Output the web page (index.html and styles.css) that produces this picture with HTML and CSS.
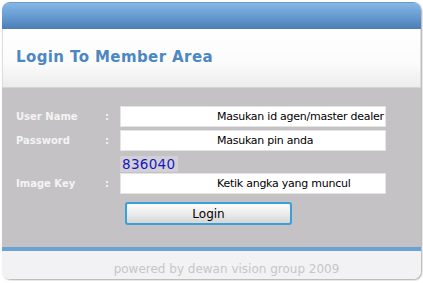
FILE: index.html
```html
<!DOCTYPE html>
<html lang="en">
<head>
    <meta charset="UTF-8">
    <title>Login To Member Area</title>
    <link rel="stylesheet" href="styles.css">
</head>
<body>

    <div class="panel">
        <div class="panel-top"></div>
        <div class="panel-head">
            <h1>Login To Member Area</h1>
        </div>

        <form class="panel-body" onsubmit="return false">
            <div class="form-grid">
                <label for="user">User Name</label>
                <span class="colon">:</span>
                <input type="text" id="user" placeholder="Masukan id agen/master dealer">

                <label for="pin">Password</label>
                <span class="colon">:</span>
                <input type="password" id="pin" placeholder="Masukan pin anda">

                <span></span>
                <span></span>
                <div class="captcha"><span>836040</span></div>

                <label for="key">Image Key</label>
                <span class="colon">:</span>
                <input type="text" id="key" placeholder="Ketik angka yang muncul">
            </div>
            <button type="submit" class="btn-login">Login</button>
        </form>

        <div class="panel-line"></div>
        <div class="panel-foot">powered by dewan vision group 2009</div>
    </div>

</body>
</html>
```

FILE: styles.css
```css
body { margin: 0; padding: 2px; background: #fff; font-family: Tahoma, "DejaVu Sans", Verdana, sans-serif; }

.panel { width: 419px; border-radius: 8px; box-shadow: 1px 1px 2px rgba(0,0,0,0.35); overflow: hidden; }

.panel-top { height: 26px; background: linear-gradient(#86b6e4, #6a9fd4 45%, #4b7db6); border-top: 1px solid #6f9ac4; }

.panel-head { height: 58px; background: linear-gradient(#fff, #fbfbfb 60%, #ececec); border-left: 1px solid #ddd; border-right: 1px solid #ddd; box-sizing: border-box; padding: 19px 0 0 13px; }
.panel-head h1 { margin: 0; font-size: 15px; font-weight: bold; color: #4d87c2; letter-spacing: 0.4px; }

.panel-body { background: #c4c2c4; padding: 18px 0 22px 0; border-top: 1px solid #d4d4d4; }

.form-grid { display: grid; grid-template-columns: 89px 15px 266px; row-gap: 3px; align-items: center; padding-left: 14px; }
.form-grid label { font-size: 10px; font-weight: bold; color: #f4f4f4; }
.colon { font-size: 10px; font-weight: bold; color: #f4f4f4; }

.form-grid input { height: 21px; box-sizing: border-box; border: 1px solid #e4e4e4; background: #fff; padding: 0 0 0 96px; font-family: inherit; font-size: 11px; letter-spacing: -0.25px; color: #000; outline: none; }
.form-grid input::placeholder { color: #000; opacity: 1; }

.captcha { height: 16px; }
.captcha span { display: inline-block; background: #d2d0d2; color: #1616c8; font-family: "DejaVu Sans", sans-serif; font-size: 13.5px; letter-spacing: 0.3px; line-height: 16px; padding: 0 3px 0 2px; }

.btn-login { display: block; margin: 8px 0 0 123px; width: 167px; height: 23px; border: 2px solid #3aa0da; border-radius: 3px; background: linear-gradient(#fdfdfd, #e8e8e8 60%, #d6d6d6); font-family: inherit; font-size: 12px; color: #000; }

.panel-line { height: 4px; background: #6aa2d4; }

.panel-foot { height: 28px; box-sizing: border-box; padding: 6px 0 0 30px; background: #f2f2f4; text-align: center; font-family: "DejaVu Sans", sans-serif; font-size: 12px; color: #c6c6c6; line-height: 24px; }
```
